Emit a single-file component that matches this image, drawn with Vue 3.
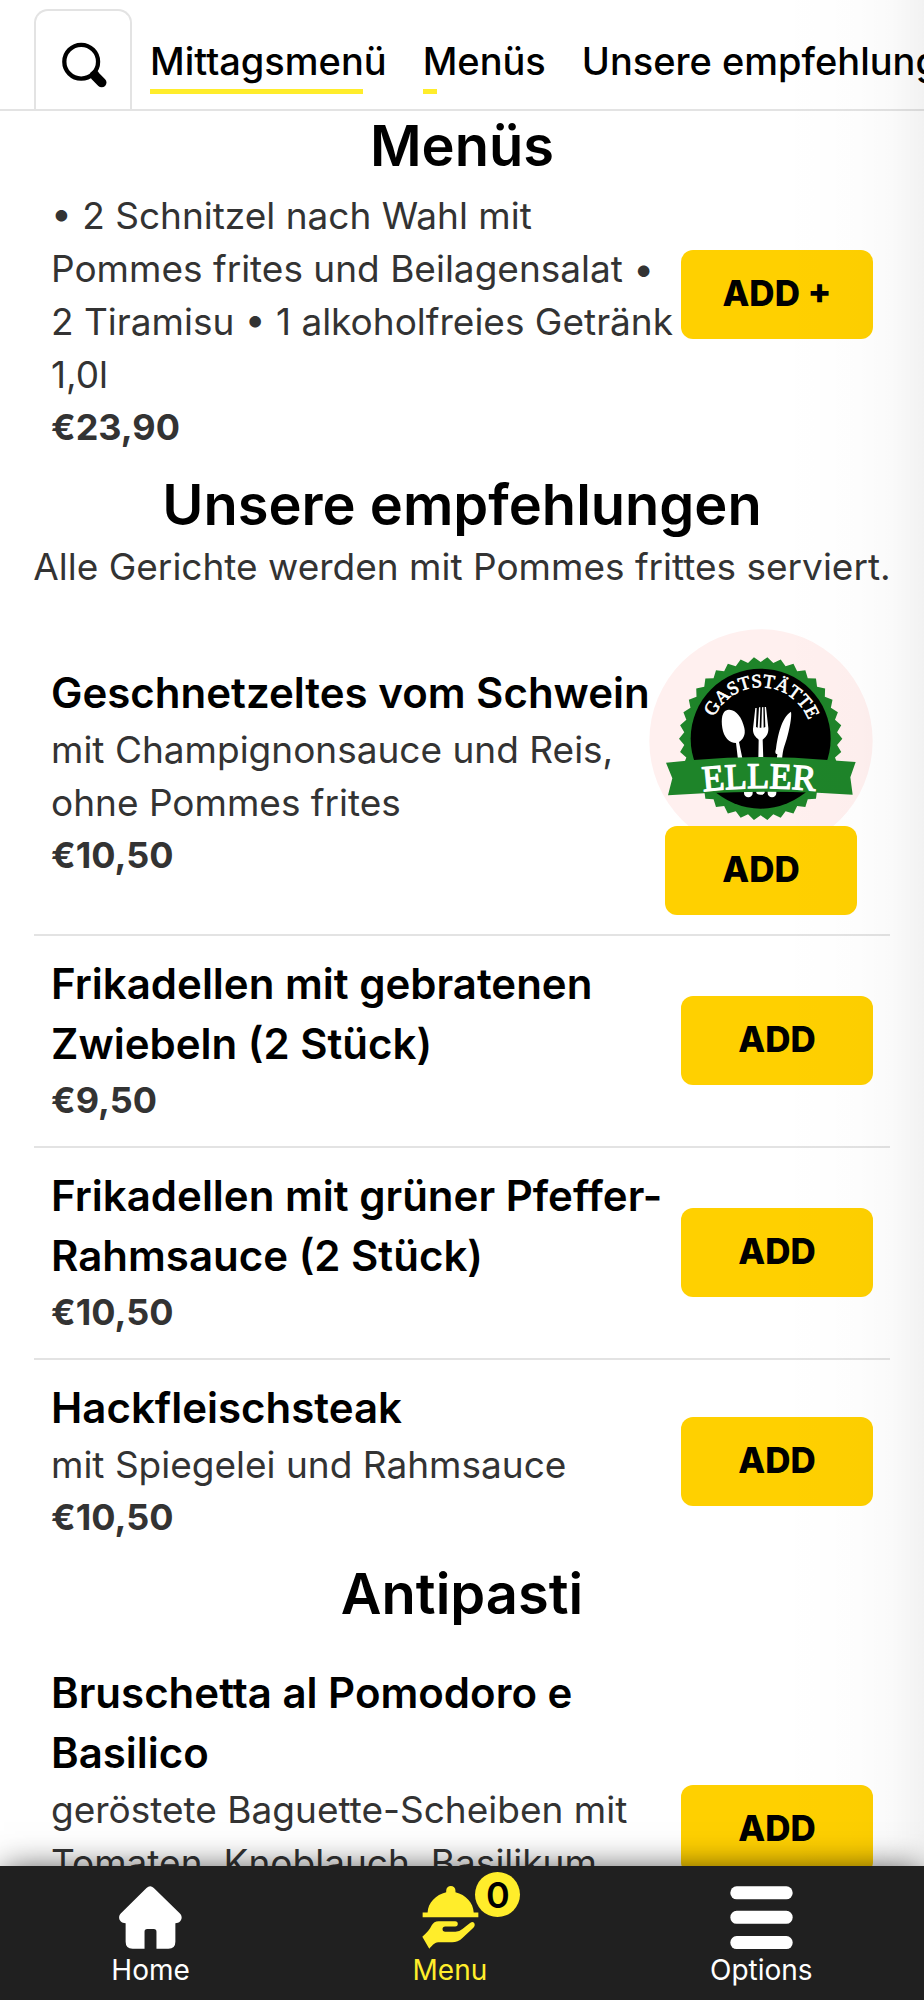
<script setup>
const tabs = [
  { label: 'Mittagsmenü', mark: 'long' },
  { label: 'Menüs', mark: 'short' },
  { label: 'Unsere empfehlungen', mark: '' },
]

const setMenu = {
  text: '• 2 Schnitzel nach Wahl mit\nPommes frites und Beilagensalat •\n2 Tiramisu • 1 alkoholfreies Getränk\n1,0l',
  price: '€23,90',
}

const recommended = [
  { title: 'Geschnetzeltes vom Schwein', text: 'mit Champignonsauce und Reis,\nohne Pommes frites', price: '€10,50', image: true },
  { title: 'Frikadellen mit gebratenen\nZwiebeln (2 Stück)', text: '', price: '€9,50' },
  { title: 'Frikadellen mit grüner Pfeffer-\nRahmsauce (2 Stück)', text: '', price: '€10,50' },
  { title: 'Hackfleischsteak', text: 'mit Spiegelei und Rahmsauce', price: '€10,50' },
]

const starter = {
  title: 'Bruschetta al Pomodoro e\nBasilico',
  text: 'geröstete Baguette-Scheiben mit\nTomaten, Knoblauch, Basilikum',
}

const teeth = 38
const seal = Array.from({ length: teeth * 2 }, (_, i) => {
  const r = i % 2 ? 245 : 230
  const a = (i * Math.PI) / teeth - Math.PI / 2
  return `${(362 + r * Math.cos(a)).toFixed(1)},${(357 + r * Math.sin(a)).toFixed(1)}`
}).join(' ')
</script>

<template>
  <div class="app">
    <header class="top">
      <button class="search" aria-label="Search">
        <svg viewBox="187 125 136 138" width="45" height="46">
          <circle cx="245" cy="184" r="51" fill="none" stroke="#000" stroke-width="13" />
          <path d="M287 227 L307 247" stroke="#000" stroke-width="29" stroke-linecap="round" />
          <path d="M272 218 L286 206 L298 216 L280 234 Z" fill="#000" />
        </svg>
      </button>
      <nav class="tabs">
        <a v-for="t in tabs" :key="t.label" href="#" class="tab" :class="t.mark">{{ t.label }}</a>
      </nav>
    </header>

    <main class="content">
      <section>
        <h2>Menüs</h2>
        <article class="item first">
          <div class="info">
            <p class="text">{{ setMenu.text }}</p>
            <p class="price">{{ setMenu.price }}</p>
          </div>
          <button class="add">ADD +</button>
        </article>
      </section>

      <section>
        <h2>Unsere empfehlungen</h2>
        <p class="note">Alle Gerichte werden mit Pommes frittes serviert.</p>
        <article v-for="d in recommended" :key="d.title" class="item">
          <div class="info">
            <h3>{{ d.title }}</h3>
            <p v-if="d.text" class="text">{{ d.text }}</p>
            <p class="price">{{ d.price }}</p>
          </div>
          <div class="media">
            <svg v-if="d.image" class="logo" viewBox="27 28 672 672" width="224" height="224" role="img" aria-label="Gaststätte Eller">
              <circle cx="363" cy="364" r="335" fill="#fff0ef" />
              <polygon :points="seal" fill="#1e8429" />
              <circle cx="362" cy="357" r="210" fill="#000" />
              <path id="arc-top" d="M208 357 A154 154 0 0 1 516 357" fill="none" />
              <text class="logo-text" font-size="57" text-anchor="middle">
                <textPath href="#arc-top" startOffset="51%">GASTSTÄTTE</textPath>
              </text>
              <g fill="#fff">
                <path d="M262 271 C285 265 306 292 313 325 C318 347 308 360 297 367 L308 420 L294 420 L288 370 C268 370 251 352 247 325 C243 298 246 275 262 271 Z" />
                <path d="M346 265 L350 265 L348 322 L353 324 L357 263 L361 263 L359 324 L364 324 L366 263 L370 262 L371 324 L376 322 L374 262 L378 262 L385 325 C386 344 377 352 368 360 L370 420 L355 420 L356 360 C346 352 338 344 339 327 Z" />
                <path d="M453 276 C456 292 448 330 440 358 C434 378 429 385 426 420 L410 420 L412 404 C405 402 405 397 408 388 C413 350 424 294 453 276 Z" />
                <path d="M312 512 h26 v8 a13 13 0 0 1 -26 0 Z" />
                <path d="M349 510 h25 v8 a12 7 0 0 1 -25 0 Z" />
                <path d="M383 512 h26 v8 a13 13 0 0 1 -26 0 Z" />
              </g>
              <path d="M78 429 L162 421 Q362 403 562 421 L647 427 L631 473 L638 525 L533 519 Q362 512 192 521 L84 527 L97 476 Z" fill="#1e8429" />
              <path id="arc-name" d="M150 520 Q362 490 574 520" fill="none" />
              <text class="logo-text logo-name" font-size="108" text-anchor="middle">
                <textPath href="#arc-name" startOffset="49%">ELLER</textPath>
              </text>
            </svg>
            <button class="add">ADD</button>
          </div>
        </article>
      </section>

      <section>
        <h2>Antipasti</h2>
        <article class="item last">
          <div class="info">
            <h3>{{ starter.title }}</h3>
            <p class="text">{{ starter.text }}</p>
          </div>
          <button class="add">ADD</button>
        </article>
      </section>
    </main>

    <footer class="bar">
      <a href="#" class="link">
        <svg viewBox="361 137 190 190" width="63" height="63" fill="currentColor">
          <path d="M444 143 Q455 133 466 143 L544 219 C556 230 549 249 531 249 L531 305 Q531 326 510 326 L474 326 L474 275 Q474 267 466 267 L446 267 Q438 267 438 275 L438 326 L402 326 Q381 326 381 305 L381 249 C363 249 355 231 367 219 Z" />
        </svg>
        <span>Home</span>
      </a>
      <a href="#" class="link active">
        <span class="dish">
          <svg viewBox="55 137 190 190" width="63" height="63" fill="currentColor">
            <path d="M140 156 V151 a14 14 0 0 1 28 0 V156 C199 163 222 188 223 217 H237 V231 H69 V217 H84 C85 188 109 163 140 156 Z" />
            <path d="M68 290 C82 278 91 267 96 256 Q103 243 117 243 H167 Q175 243 175 251 Q175 259 167 259 H137 Q129 259 129 267 Q129 275 137 275 H168 Q180 275 189 267 L210 250 Q218 242 224 248 Q229 255 222 263 L189 294 Q175 307 158 307 H116 C103 307 98 319 89 326 Z" />
          </svg>
          <b class="badge">0</b>
        </span>
        <span>Menu</span>
      </a>
      <a href="#" class="link">
        <svg viewBox="985 137 190 190" width="63" height="63" fill="currentColor">
          <rect x="986" y="138" width="188" height="39" rx="19" />
          <rect x="986" y="212" width="188" height="39" rx="19" />
          <rect x="986" y="288" width="188" height="39" rx="19" />
        </svg>
        <span>Options</span>
      </a>
    </footer>
    <div class="shade"></div>
  </div>
</template>

<style>
body {
  margin: 0;
  background: #fff;
}
</style>

<style scoped>
.app {
  position: relative;
  display: flex;
  flex-direction: column;
  height: 100vh;
  overflow: hidden;
  font-family: Inter, "Open Sans", sans-serif;
  color: #000;
}
h2, h3, p {
  margin: 0;
}
.top {
  display: flex;
  flex: none;
  align-items: flex-end;
  height: 109px;
  padding-left: 34px;
  border-bottom: 2px solid #e3e3e3;
}
.search {
  display: flex;
  flex: none;
  align-items: center;
  justify-content: center;
  box-sizing: border-box;
  width: 98px;
  height: 100px;
  padding: 10px 0 0 2px;
  background: #fff;
  border: 2px solid #e3e3e3;
  border-bottom: 0;
  border-radius: 14px 14px 0 0;
}
.tabs {
  display: flex;
  gap: 36px;
  margin-left: 18px;
  padding-bottom: 15px;
}
.tab {
  position: relative;
  color: #000;
  font-size: 38px;
  font-weight: 500;
  line-height: 54px;
  padding-bottom: 6px;
  text-decoration: none;
  white-space: nowrap;
}
.long::after,
.short::after {
  content: "";
  position: absolute;
  left: 0;
  bottom: 0;
  height: 5px;
  background: #ffed2b;
}
.long::after {
  width: 90%;
}
.short::after {
  width: 14px;
}
.content {
  flex: 1;
  min-height: 0;
  overflow: hidden;
  padding-top: 4px;
}
h2 {
  font-size: 56px;
  font-weight: 600;
  line-height: 62px;
  text-align: center;
}
.note {
  margin-top: 4px;
  color: #333;
  font-size: 37px;
  line-height: 54px;
  text-align: center;
  white-space: nowrap;
}
.note + .item {
  margin-top: 17px;
}
.item {
  display: flex;
  align-items: center;
  justify-content: space-between;
  margin: 0 34px;
  padding: 18px 17px 19px;
}
.item + .item {
  border-top: 2px solid #e3e3e3;
}
.first {
  align-items: flex-start;
  padding-top: 12px;
  padding-bottom: 20px;
}
.first .add {
  margin-top: 61px;
}
.last {
  align-items: flex-start;
  margin-top: 20px;
}
.last .add {
  margin-top: 122px;
}
.info {
  flex: 1;
  min-width: 0;
  white-space: pre;
}
h3 {
  font-size: 42px;
  font-weight: 600;
  line-height: 60px;
}
.text,
.price {
  color: #333;
  font-size: 37px;
  line-height: 53px;
}
.price {
  font-size: 36px;
  font-weight: 700;
}
.media {
  display: flex;
  flex: none;
  flex-direction: column;
  align-items: center;
}
.logo {
  margin-bottom: -27px;
}
.logo-text {
  fill: #fff;
  font-family: "Liberation Serif", serif;
  stroke: #fff;
  stroke-width: 2px;
}
.logo-name {
  stroke-width: 4px;
}
.add {
  position: relative;
  flex: none;
  width: 192px;
  height: 89px;
  padding: 0 0 3px;
  background: #ffd000;
  border: 0;
  border-radius: 12px;
  color: #000;
  font-family: inherit;
  font-size: 35px;
  font-weight: 800;
}
.bar {
  position: relative;
  display: flex;
  flex: none;
  justify-content: space-around;
  box-sizing: border-box;
  height: 134px;
  padding-top: 20px;
  background: #202020;
  box-shadow: 0 0 32px -4px rgba(0, 0, 0, 0.75);
}
.link {
  display: flex;
  flex-direction: column;
  align-items: center;
  color: #fff;
  font-size: 28px;
  line-height: 42px;
  text-decoration: none;
}
.active {
  color: #ffed2b;
}
.dish {
  position: relative;
  display: flex;
}
.badge {
  position: absolute;
  left: 57px;
  top: -14px;
  width: 45px;
  height: 45px;
  border-radius: 50%;
  background: #ffed2b;
  color: #000;
  font-size: 36px;
  font-weight: 600;
  line-height: 47px;
  text-align: center;
}
.shade {
  position: absolute;
  top: 0;
  right: 0;
  bottom: 134px;
  width: 150px;
  background: linear-gradient(to right, rgba(0, 0, 0, 0), rgba(0, 0, 0, 0.008) 55%, rgba(0, 0, 0, 0.02) 78%, rgba(0, 0, 0, 0.05));
  pointer-events: none;
}
</style>
